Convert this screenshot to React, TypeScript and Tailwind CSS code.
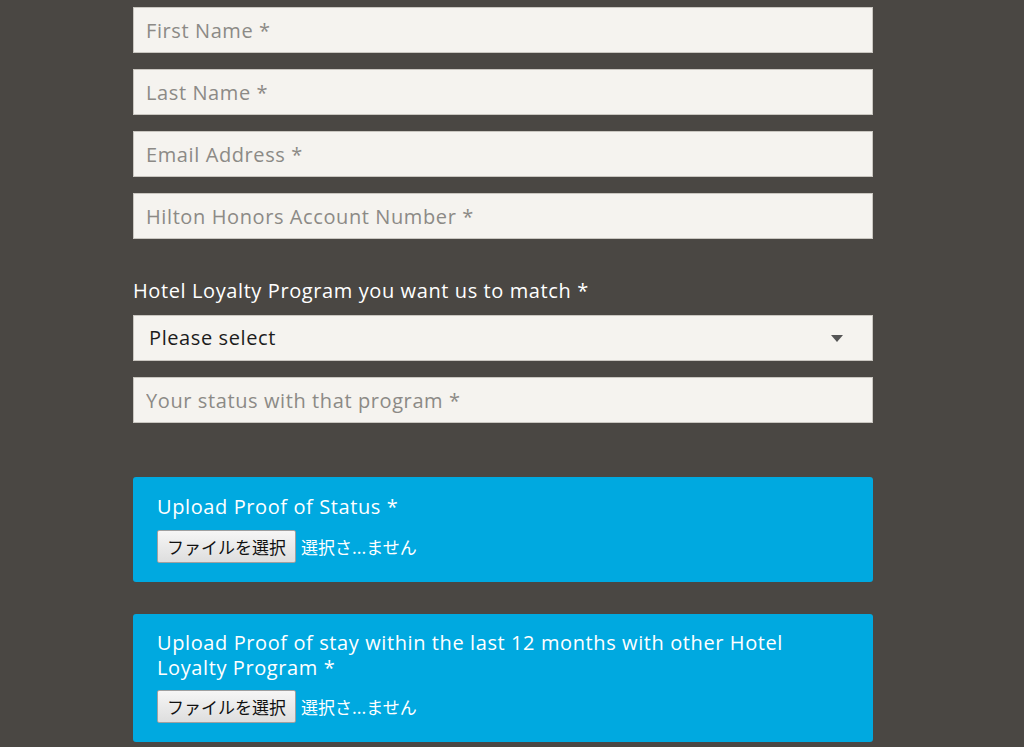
import React from 'react';

const fieldCls =
  'block w-full h-[46px] bg-[#f5f3ef] border border-[#c9c6c0] px-[12px] text-[20px] tracking-[0.6px] text-[#222] placeholder:text-[#8c8a86] outline-none';

const FileRow: React.FC = () => (
  <div className="flex items-center gap-[5px] mt-[10px] font-['Noto_Sans_CJK_JP',sans-serif] tracking-normal">
    <button className="h-[33px] px-[9px] bg-gradient-to-b from-[#f6f6f6] to-[#dedede] border border-[#a0a0a0] rounded-[2px] text-[17px] text-[#111]">
      ファイルを選択
    </button>
    <span className="text-[17px] text-white">選択さ...ません</span>
  </div>
);

const App: React.FC = () => {
  return (
    <div className="min-h-[747px] bg-[#4a4743] font-['Open_Sans',sans-serif]">
      <div className="w-[740px] ml-[133px] pt-[7px]">
        {/* Contact fields */}
        <div className="flex flex-col gap-[16px]">
          <input className={fieldCls} placeholder="First Name *" />
          <input className={fieldCls} placeholder="Last Name *" />
          <input className={fieldCls} placeholder="Email Address *" />
          <input className={fieldCls} placeholder="Hilton Honors Account Number *" />
        </div>

        {/* Loyalty program */}
        <label className="block mt-[37px] mb-[9px] text-[20px] tracking-[0.6px] text-white">
          Hotel Loyalty Program you want us to match *
        </label>
        <div className="relative">
          <div className="flex items-center h-[46px] bg-[#f5f3ef] border border-[#c9c6c0] pl-[15px] text-[20px] tracking-[0.6px] text-[#1c1c1c]">
            Please select
          </div>
          <svg className="absolute right-[30px] top-[20px]" width="12" height="7" viewBox="0 0 12 7">
            <path d="M0 0 L12 0 L6 7 Z" fill="#555" />
          </svg>
        </div>
        <input className={fieldCls + ' mt-[16px]'} placeholder="Your status with that program *" />

        {/* Uploads */}
        <div className="mt-[54px] bg-[#00a9e0] rounded-[3px] px-[24px] pt-[17px] pb-[19px]">
          <div className="text-[20px] leading-[26px] tracking-[0.6px] text-white">Upload Proof of Status *</div>
          <FileRow />
        </div>
        <div className="mt-[32px] bg-[#00a9e0] rounded-[3px] px-[24px] pt-[16px] pb-[19px]">
          <div className="text-[20px] leading-[25px] tracking-[0.6px] text-white">
            Upload Proof of stay within the last 12 months with other Hotel
            <br />
            Loyalty Program *
          </div>
          <FileRow />
        </div>
      </div>
    </div>
  );
};

export default App;
